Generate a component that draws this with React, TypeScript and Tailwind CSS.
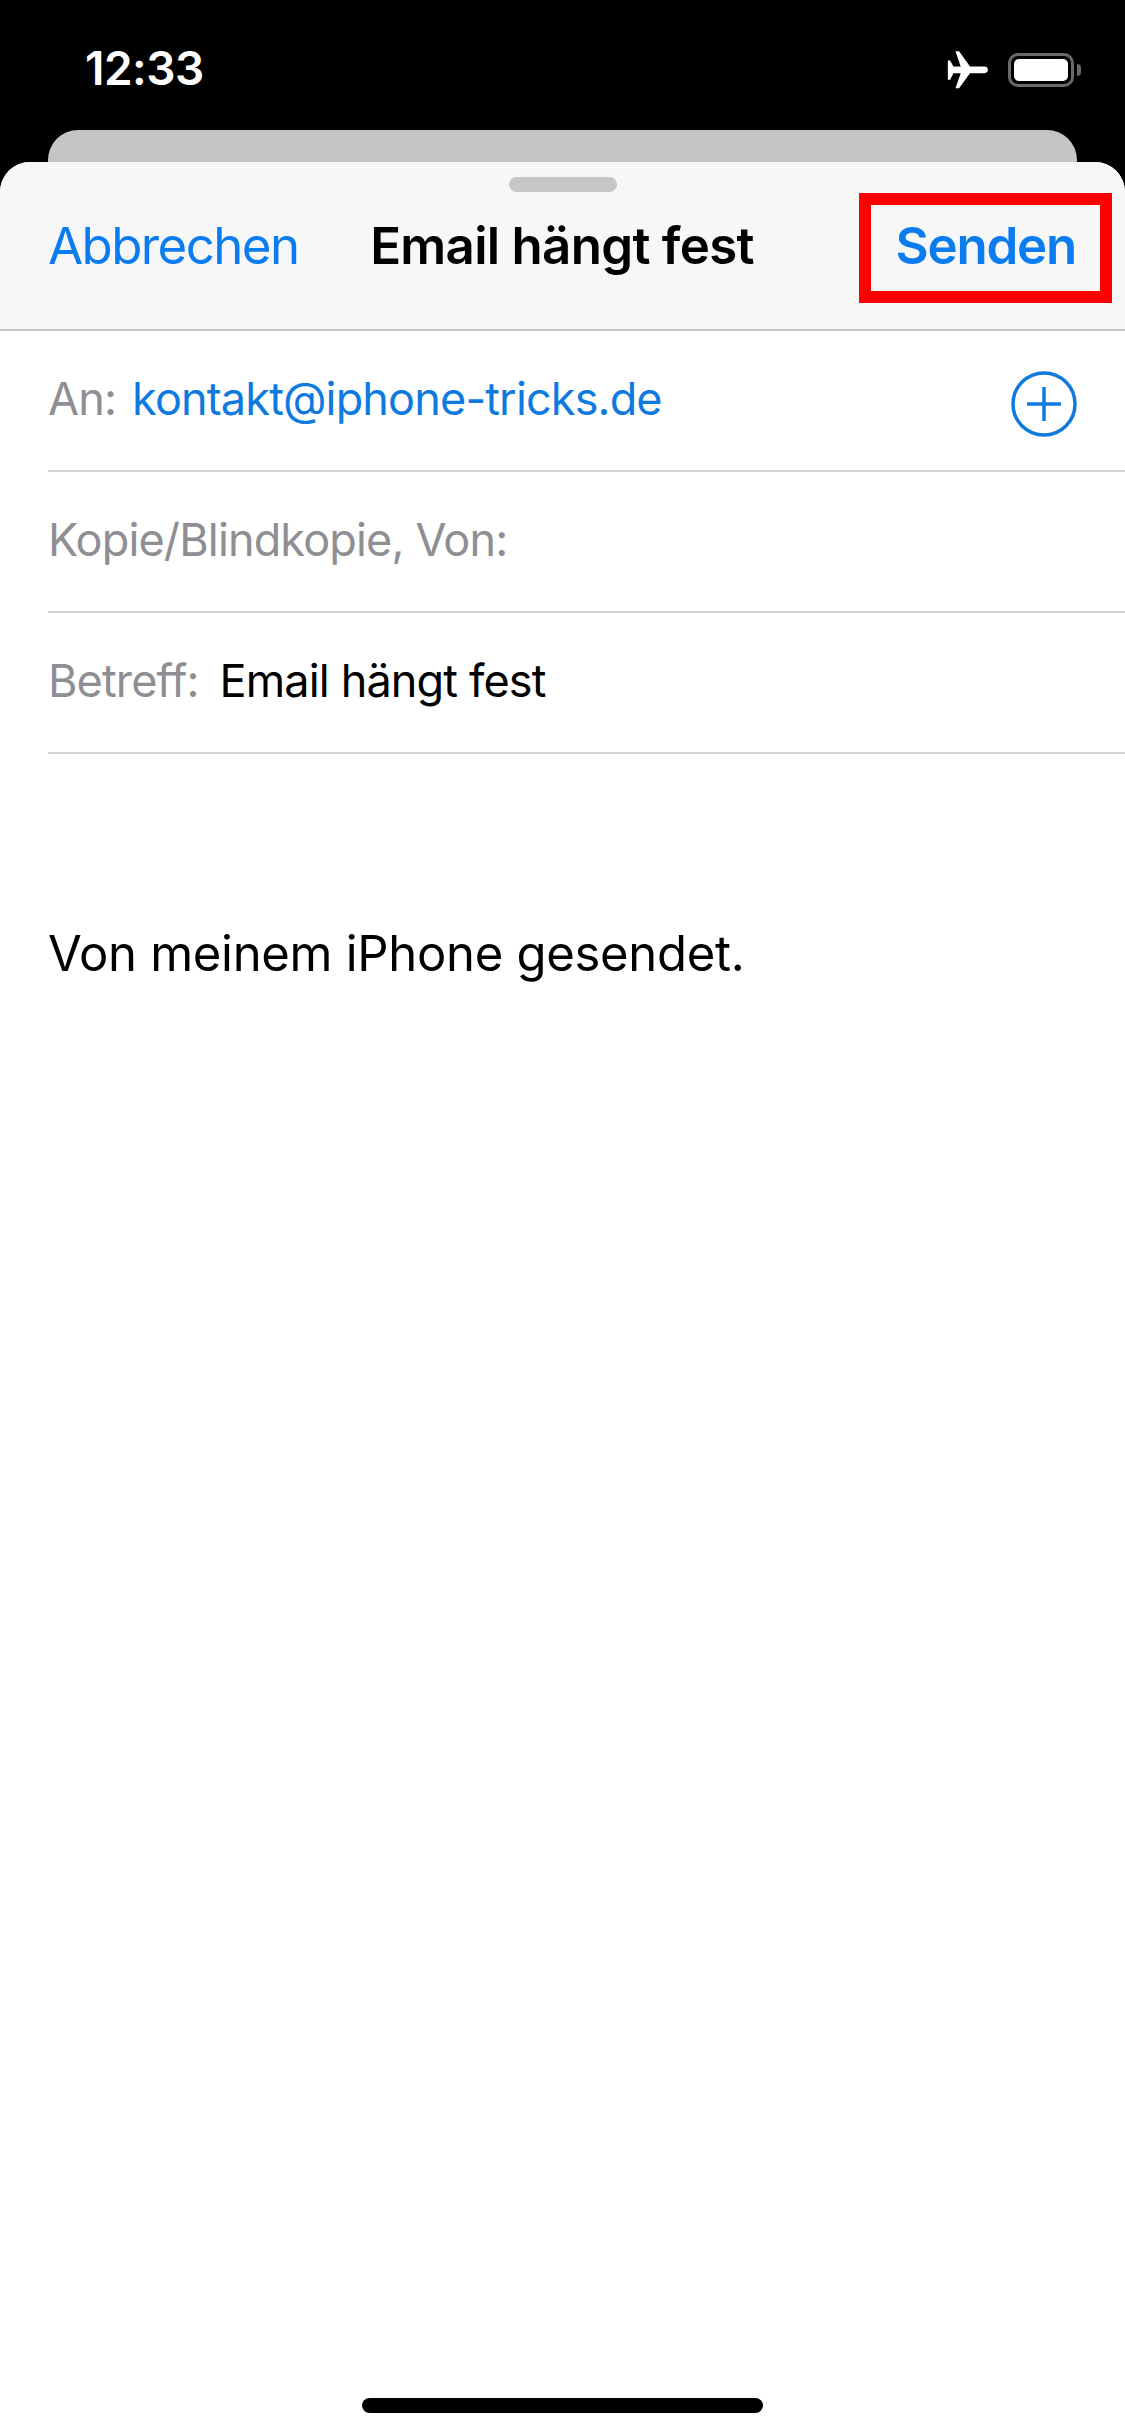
export default function App() {
  return (
    <div className="relative flex h-[2436px] w-[1125px] flex-col overflow-hidden bg-black font-['Inter','Liberation_Sans',sans-serif]">
      <StatusBar />
      <div className="mx-[48px] h-[32px] shrink-0 rounded-t-[30px] bg-[#c4c5c7]" />
      <div className="relative flex flex-1 flex-col rounded-t-[30px] bg-white">
        <Header />
        <Row>
          <span className="text-[#8e8e93]">An:</span>
          <span className="ml-[16px] text-[#0e7ae0]">kontakt@iphone-tricks.de</span>
          <PlusCircle />
        </Row>
        <Row>
          <span className="text-[#8e8e93]">Kopie/Blindkopie, Von:</span>
        </Row>
        <Row>
          <span className="text-[#8e8e93]">Betreff:</span>
          <span className="ml-[21px] text-black">Email hängt fest</span>
        </Row>
        <p className="mt-[171px] ml-[48px] text-[49px] leading-[58px] tracking-[-0.3px] text-black">Von meinem iPhone gesendet.</p>
        <div className="absolute bottom-[23px] left-[362px] h-[15px] w-[401px] rounded-full bg-black" />
      </div>
    </div>
  );
}

function StatusBar() {
  return (
    <div className="flex h-[130px] shrink-0 items-start justify-between pt-[44px] pr-[44px] pl-[85px]">
      <span className="text-[46px] leading-[48px] font-semibold tracking-[-0.5px] text-white">12:33</span>
      <div className="flex items-center gap-[18px] pt-[6px]">
        <svg width="44" height="39" viewBox="140 58 132 118" fill="#fff">
          <path d="M168 62h11l33 46h44a10 10 0 0 1 0 20h-44l-33 46h-11l16-46h-22l-10 20h-7V90h7l10 18h22z" />
        </svg>
        <div className="flex items-center gap-[3px]">
          <div className="flex h-[34px] w-[66px] items-center rounded-[10px] border-[3px] border-[#6a6a6a] p-[3px]">
            <div className="h-full w-full rounded-[5px] bg-white" />
          </div>
          <div className="h-[12px] w-[4px] rounded-r-full bg-[#6a6a6a]" />
        </div>
      </div>
    </div>
  );
}

function Header() {
  return (
    <div className="relative flex h-[169px] shrink-0 flex-col rounded-t-[30px] border-b-2 border-[#c4c4c6] bg-[#f7f7f8]">
      <div className="mx-auto mt-[15px] h-[15px] w-[108px] shrink-0 rounded-full bg-[#c6c7c9]" />
      <div className="mt-[22px] grid grid-cols-[1fr_auto_1fr] items-center pr-[49px] pl-[48px] text-[51px] leading-[64px]">
        <span className="tracking-[-1.6px] text-[#0a7cf0]">Abbrechen</span>
        <span className="font-semibold tracking-[-0.7px] text-black">Email hängt fest</span>
        <span className="text-right font-semibold tracking-[-1.2px] text-[#0a7cf0]">Senden</span>
      </div>
      {/* rote Markierung um den Senden-Button */}
      <div className="absolute top-[31px] left-[859px] h-[110px] w-[253px] border-[12px] border-[#fe0000]" />
    </div>
  );
}

function Row({ children }: { children: React.ReactNode }) {
  return (
    <div className="ml-[48px] flex h-[141px] shrink-0 items-center border-b-2 border-[#d4d4d6] pb-[4px] text-[45px] leading-[56px] tracking-[-0.85px]">
      {children}
    </div>
  );
}

function PlusCircle() {
  return (
    <svg className="mt-[10px] mr-[48px] ml-auto" width="66" height="66" viewBox="0 0 66 66" fill="none" stroke="#0e7ae0" strokeWidth="3.5">
      <circle cx="33" cy="33" r="31" />
      <path d="M33 16v34M16 33h34" />
    </svg>
  );
}
